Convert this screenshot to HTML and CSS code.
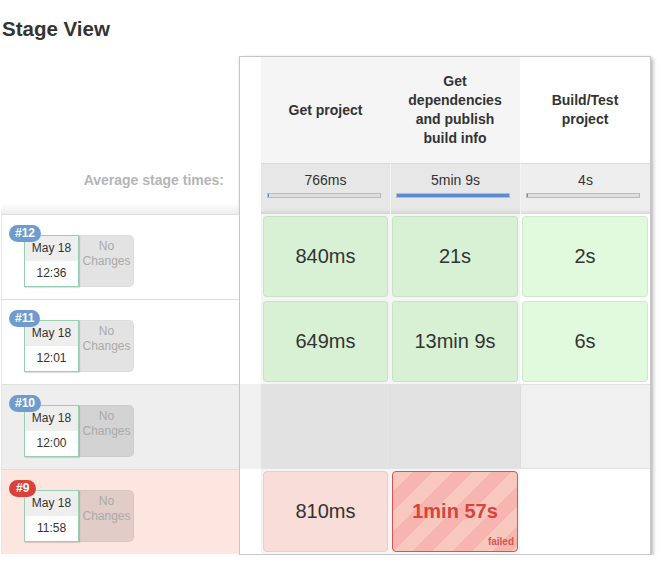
FILE: index.html
```html
<!DOCTYPE html>
<html>
<head>
<meta charset="utf-8">
<title>Stage View</title>
<link rel="stylesheet" href="styles.css">
</head>
<body>
<h1 class="title">Stage View</h1>
<div class="stage-view">
  <div class="builds">
    <div class="builds-head"></div>
    <div class="avg-label">Average stage times:</div>
    <div class="build">
      <span class="badge">#12</span>
      <div class="date"><div class="day">May 18</div><div class="time">12:36</div></div>
      <div class="changes">No<br>Changes</div>
    </div>
    <div class="build">
      <span class="badge">#11</span>
      <div class="date"><div class="day">May 18</div><div class="time">12:01</div></div>
      <div class="changes">No<br>Changes</div>
    </div>
    <div class="build build-aborted">
      <span class="badge">#10</span>
      <div class="date"><div class="day">May 18</div><div class="time">12:00</div></div>
      <div class="changes">No<br>Changes</div>
    </div>
    <div class="build build-failed">
      <span class="badge badge-failed">#9</span>
      <div class="date"><div class="day">May 18</div><div class="time">11:58</div></div>
      <div class="changes">No<br>Changes</div>
    </div>
  </div>

  <div class="table">
    <div class="trow head">
      <div class="gutter"></div>
      <div class="th shade">Get project</div>
      <div class="th shade">Get dependencies and publish build info</div>
      <div class="th">Build/Test project</div>
    </div>
    <div class="trow avg">
      <div class="gutter"></div>
      <div class="avg-cell shade"><div class="avg-time">766ms</div><div class="bar"><div class="fill" style="width:1px"></div></div></div>
      <div class="avg-cell shade sep"><div class="avg-time">5min 9s</div><div class="bar"><div class="fill" style="width:100%"></div></div></div>
      <div class="avg-cell sep light"><div class="avg-time">4s</div><div class="bar"><div class="fill" style="width:1px"></div></div></div>
    </div>
    <div class="trow">
      <div class="gutter"></div>
      <div class="td shade"><div class="cell ok">840ms</div></div>
      <div class="td shade"><div class="cell ok">21s</div></div>
      <div class="td"><div class="cell ok">2s</div></div>
    </div>
    <div class="trow">
      <div class="gutter"></div>
      <div class="td shade"><div class="cell ok">649ms</div></div>
      <div class="td shade"><div class="cell ok">13min 9s</div></div>
      <div class="td"><div class="cell ok">6s</div></div>
    </div>
    <div class="trow aborted">
      <div class="gutter"></div>
      <div class="td shade2 line"></div>
      <div class="td shade2 line"></div>
      <div class="td line"></div>
    </div>
    <div class="trow">
      <div class="gutter"></div>
      <div class="td shade"><div class="cell prev-failed">810ms</div></div>
      <div class="td shade"><div class="cell failed">1min 57s<span class="failed-tag">failed</span></div></div>
      <div class="td"></div>
    </div>
  </div>
</div>
</body>
</html>
```
FILE: styles.css
```css
* { box-sizing: border-box; }

body {
  margin: 0;
  font-family: "Liberation Sans", Arial, Helvetica, sans-serif;
  color: #333;
  background: #fff;
}

.title {
  margin: 17px 0 0 2px;
  font-size: 20.5px;
  line-height: 24px;
  font-weight: bold;
  color: #333;
}

.stage-view {
  display: flex;
  margin: 15px 0 0 1px;
}

/* ---------- left build column ---------- */
.builds {
  width: 238px;
  display: flex;
  flex-direction: column;
}

.builds-head { height: 107px; }

.avg-label {
  height: 51px;
  padding: 9px 15px 0 0;
  text-align: right;
  font-size: 14px;
  line-height: 17px;
  font-weight: bold;
  color: #b5b5b5;
  background: linear-gradient(to bottom, rgba(0,0,0,0) 40px, rgba(0,0,0,0.07) 51px);
}

.build {
  position: relative;
  height: 85px;
  display: flex;
  align-items: flex-start;
  padding: 20px 0 0 22px;
  border-top: 1px solid #dedede;
  border-left: 1px solid #e6e6e6;
  background: #fff;
}

.build-aborted { background: #eeeeee; }
.build-failed { background: #fde6e0; }

.badge {
  position: absolute;
  left: 7px;
  top: 10px;
  z-index: 2;
  height: 17px;
  padding: 0 6px;
  border-radius: 9px;
  background: #6f9ccf;
  color: #fff;
  font-size: 12px;
  line-height: 17px;
  font-weight: bold;
}

.badge-failed { background: #d9413a; padding: 0 7px; }

.date {
  width: 55px;
  height: 52px;
  border: 1px solid #98cfb3;
  background: #fff;
  box-shadow: 1px 1px 1px rgba(0,0,0,0.12);
  font-size: 12px;
  text-align: center;
  color: #333;
}

.day {
  height: 25px;
  line-height: 25px;
  background: #eeeeee;
}

.time {
  height: 25px;
  line-height: 25px;
}

.changes {
  width: 55px;
  height: 52px;
  padding-top: 3px;
  border-radius: 0 5px 5px 0;
  background: rgba(0,0,0,0.11);
  border: 1px solid rgba(0,0,0,0.03);
  color: #aaaaaa;
  font-size: 12px;
  line-height: 15px;
  text-align: center;
}

/* ---------- stage table ---------- */
.table {
  width: 412px;
  border: 1px solid #c6c6c6;
  box-shadow: 2px 2px 4px rgba(0,0,0,0.3);
  background: #fff;
}

.trow {
  display: grid;
  grid-template-columns: 21px 129px 130px 130px;
  height: 85px;
}

.trow.head { height: 106px; }
.trow.avg { height: 51px; }
.trow.aborted { background: #f0f0f0; }

.shade { background: rgba(0,0,0,0.04); }
.shade2 { background: rgba(0,0,0,0.055); }
.line { border-top: 1px solid #e2e2e2; border-bottom: 1px solid #e2e2e2; }
.trow.aborted .td + .td { border-left: 1px solid #dddddd; }

.th {
  display: flex;
  align-items: center;
  justify-content: center;
  padding: 0 10px;
  text-align: center;
  font-size: 14px;
  line-height: 19px;
  font-weight: bold;
  color: #333;
}

.avg-cell {
  border-top: 1px solid #dadada;
  padding-top: 8px;
  background-color: #e7e7e7;
  box-shadow: inset 0 -4px 4px -3px rgba(0,0,0,0.14);
  text-align: center;
}

.avg-cell.light { background-color: #eeeeee; }
.avg-cell.sep { border-left: 1px solid #f4f4f4; }

.avg-time {
  font-size: 14px;
  line-height: 17px;
  color: #333;
}

.bar {
  width: 114px;
  height: 5px;
  margin: 4px 0 0 6px;
  border: 1px solid #bcbcbc;
  background: #dedede;
  text-align: left;
}

.avg-cell.sep .bar { margin-left: 5px; }

.fill {
  height: 100%;
  background: #5a8ad6;
}

.td {
  padding: 2px;
}

.cell {
  position: relative;
  height: 100%;
  display: flex;
  align-items: center;
  justify-content: center;
  border-radius: 4px;
  font-size: 20px;
  color: #333;
}

.cell.ok {
  background: rgba(40,220,20,0.14);
  border: 1px solid rgba(0,80,0,0.09);
}

.cell.prev-failed {
  background: #f8ddd8;
  border: 1px solid #e8cdc9;
}

.cell.failed {
  border: 1px solid #d9534f;
  background: repeating-linear-gradient(135deg, #f8c8be 0 14px, #f7b5b0 14px 28px);
  color: #d9433b;
  font-weight: bold;
}

.failed-tag {
  position: absolute;
  right: 3px;
  bottom: 3px;
  font-size: 10px;
  line-height: 12px;
  font-weight: bold;
  color: #d9534f;
}
```
